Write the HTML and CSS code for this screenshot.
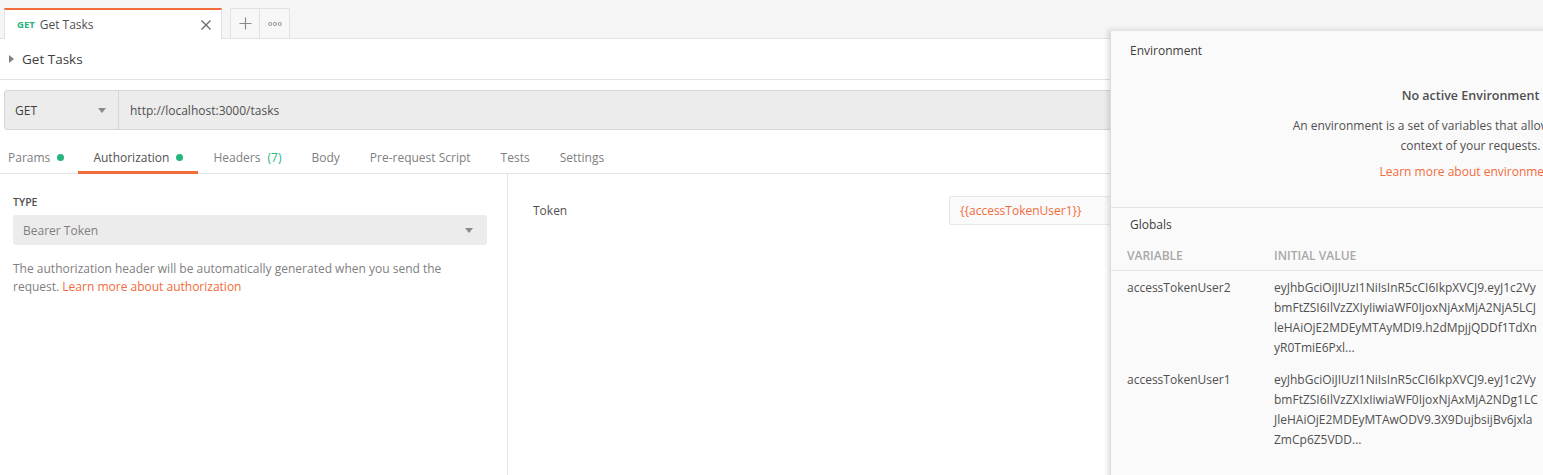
FILE: index.html
```html
<!DOCTYPE html>
<html>
<head>
<meta charset="utf-8">
<link rel="stylesheet" href="styles.css">
</head>
<body>
<div class="app">
  <div class="tabbar">
    <div class="tab">
      <span class="tab-method">GET</span>
      <span class="tab-name">Get Tasks</span>
      <svg class="tab-close" width="12" height="12" viewBox="0 0 12 12"><path d="M1.5 1.5 L10.5 10.5 M10.5 1.5 L1.5 10.5" stroke="#6b6b6b" stroke-width="1.4" fill="none"/></svg>
    </div>
    <div class="tab-actions">
      <div class="tab-btn"><svg width="13" height="13" viewBox="0 0 13 13"><path d="M6.5 0.5 V12.5 M0.5 6.5 H12.5" stroke="#8a8a8a" stroke-width="1.2" fill="none"/></svg></div>
      <div class="tab-btn"><svg width="14" height="6" viewBox="0 0 14 6"><circle cx="2.2" cy="3" r="1.6" stroke="#8a8a8a" fill="none" stroke-width="0.9"/><circle cx="7" cy="3" r="1.6" stroke="#8a8a8a" fill="none" stroke-width="0.9"/><circle cx="11.8" cy="3" r="1.6" stroke="#8a8a8a" fill="none" stroke-width="0.9"/></svg></div>
    </div>
  </div>

  <div class="req-header">
    <svg class="caret-right" width="5" height="8" viewBox="0 0 5 8"><path d="M0 0 L5 4 L0 8 Z" fill="#808080"/></svg>
    <span class="req-title">Get Tasks</span>
  </div>

  <div class="urlbar">
    <div class="method">
      <span>GET</span>
      <svg width="8" height="5" viewBox="0 0 8 5"><path d="M0 0 H8 L4 5 Z" fill="#8a8a8a"/></svg>
    </div>
    <div class="url">http://localhost:3000/tasks</div>
  </div>

  <div class="req-tabs">
    <div class="rtab first">Params <span class="dot"></span></div>
    <div class="rtab active">Authorization <span class="dot"></span></div>
    <div class="rtab">Headers <span class="count">(7)</span></div>
    <div class="rtab">Body</div>
    <div class="rtab">Pre-request Script</div>
    <div class="rtab">Tests</div>
    <div class="rtab">Settings</div>
  </div>

  <div class="content">
    <div class="auth-left">
      <div class="type-label">TYPE</div>
      <div class="select">
        <span>Bearer Token</span>
        <svg width="8" height="5" viewBox="0 0 8 5"><path d="M0 0 H8 L4 5 Z" fill="#8a8a8a"/></svg>
      </div>
      <p class="auth-desc">The authorization header will be automatically generated when you send the request. <span class="link">Learn more about authorization</span></p>
    </div>
    <div class="auth-right">
      <div class="token-row">
        <span class="token-label">Token</span>
        <div class="token-input">{{accessTokenUser1}}</div>
      </div>
    </div>
  </div>
</div>

<div class="env-panel">
  <div class="env-section">
    <div class="env-title">Environment</div>
    <div class="env-empty">
      <div class="env-empty-title">No active Environment</div>
      <p class="env-empty-text">An environment is a set of variables that allow you to switch the context of your requests.</p>
      <div class="link">Learn more about environments</div>
    </div>
  </div>
  <div class="globals">
    <div class="env-title">Globals</div>
    <div class="var-table">
      <div class="var-head">
        <span class="col-var">VARIABLE</span>
        <span class="col-val">INITIAL VALUE</span>
      </div>
      <div class="var-row">
        <span class="col-var">accessTokenUser2</span>
        <span class="col-val">
          <span class="vline">eyJhbGciOiJIUzI1NiIsInR5cCI6IkpXVCJ9.eyJ1c2Vy</span>
          <span class="vline">bmFtZSI6IlVzZXIyIiwiaWF0IjoxNjAxMjA2NjA5LCJ</span>
          <span class="vline">leHAiOjE2MDEyMTAyMDI9.h2dMpjjQDDf1TdXn</span>
          <span class="vline">yR0TmiE6Pxl...</span>
        </span>
      </div>
      <div class="var-row">
        <span class="col-var">accessTokenUser1</span>
        <span class="col-val">
          <span class="vline">eyJhbGciOiJIUzI1NiIsInR5cCI6IkpXVCJ9.eyJ1c2Vy</span>
          <span class="vline">bmFtZSI6IlVzZXIxIiwiaWF0IjoxNjAxMjA2NDg1LC</span>
          <span class="vline">JleHAiOjE2MDEyMTAwODV9.3X9DujbsijBv6jxla</span>
          <span class="vline">ZmCp6Z5VDD...</span>
        </span>
      </div>
    </div>
  </div>
</div>
</body>
</html>
```

FILE: styles.css
```css
* { box-sizing: border-box; }
html, body { margin: 0; padding: 0; }
body {
  font-family: "Open Sans", "Liberation Sans", sans-serif;
  font-size: 12px;
  color: #505050;
  background: #fff;
  width: 1543px;
  height: 475px;
  overflow: hidden;
  position: relative;
}
p { margin: 0; }

.tabbar {
  height: 39px;
  background: #f5f5f5;
  border-bottom: 1px solid #e2e2e2;
  display: flex;
  align-items: flex-end;
  padding-left: 4px;
}
.tab {
  width: 218px;
  height: 31px;
  background: #fff;
  border-top: 2px solid #f26b3a;
  border-left: 1px solid #e2e2e2;
  border-right: 1px solid #e2e2e2;
  margin-bottom: -1px;
  display: flex;
  align-items: center;
  padding: 0 9px 0 12px;
}
.tab-method {
  color: #26b47f;
  font-weight: 700;
  font-size: 9.5px;
  margin-right: 5px;
}
.tab-name { color: #505050; flex: 1; }
.tab-close { display: block; }
.tab-actions {
  display: flex;
  margin-left: 8px;
}
.tab-btn {
  width: 30px;
  height: 30px;
  border: 1px solid #e2e2e2;
  border-bottom: none;
  background: #f7f7f7;
  display: flex;
  align-items: center;
  justify-content: center;
}
.tab-btn + .tab-btn { border-left: none; }

.req-header {
  height: 41px;
  border-bottom: 1px solid #e2e2e2;
  display: flex;
  align-items: center;
  padding-left: 9px;
}
.caret-right { margin-right: 8px; }
.req-title {
  font-size: 13.5px;
  font-weight: 400;
  color: #404040;
}

.urlbar {
  margin: 10px 0 0 4px;
  width: 1300px;
  height: 40px;
  background: #ececec;
  border: 1px solid #d6d6d6;
  border-radius: 3px 0 0 3px;
  display: flex;
  align-items: center;
}
.method {
  width: 114px;
  height: 100%;
  border-right: 1px solid #d6d6d6;
  display: flex;
  align-items: center;
  justify-content: space-between;
  padding: 0 12px 0 10px;
  color: #404040;
  font-weight: 400;
}
.url {
  padding-left: 11px;
  color: #505050;
}

.req-tabs {
  margin-top: 10px;
  height: 34px;
  border-bottom: 1px solid #e2e2e2;
  display: flex;
  align-items: stretch;
}
.rtab {
  padding: 0 15px;
  display: flex;
  align-items: center;
  color: #808080;
  font-size: 12px;
  border-bottom: 3px solid transparent;
  padding-top: 3px;
  margin-bottom: -1px;
  white-space: pre;
}
.rtab.first { padding-left: 8px; padding-right: 14px; }
.rtab.active {
  color: #505050;
  border-bottom-color: #f26b3a;
}
.dot {
  display: inline-block;
  width: 7px;
  height: 7px;
  border-radius: 50%;
  background: #26b47f;
  margin-left: 4px;
}
.count { color: #26b47f; margin-left: 4px; }

.content {
  display: flex;
  height: 302px;
}
.auth-left {
  width: 508px;
  border-right: 1px solid #e2e2e2;
  padding: 21px 20px 0 13px;
}
.type-label {
  font-size: 10.5px;
  font-weight: 600;
  color: #505050;
  margin-bottom: 6px;
}
.select {
  height: 30px;
  background: #ececec;
  border-radius: 3px;
  display: flex;
  align-items: center;
  justify-content: space-between;
  padding: 0 14px 0 10px;
  color: #808080;
}
.auth-desc {
  margin-top: 15px;
  line-height: 18px;
  color: #808080;
  width: 460px;
}
.link { color: #f26b3a; }

.auth-right {
  flex: 1;
  padding: 22px 0 0 25px;
}
.token-row {
  display: flex;
  align-items: center;
}
.token-label {
  width: 416px;
  color: #505050;
}
.token-input {
  width: 300px;
  height: 29px;
  border: 1px solid #e8e8e8;
  border-radius: 2px;
  background: #fafafa;
  color: #f26b3a;
  display: flex;
  align-items: center;
  padding-left: 10px;
}

.env-panel {
  position: absolute;
  left: 1110px;
  top: 30px;
  width: 720px;
  height: 460px;
  background: #fafafa;
  border-top: 1px solid #e4e4e4;
  border-left: 1px solid #dcdcdc;
  box-shadow: -2px 0 5px rgba(0, 0, 0, 0.14);
}
.env-section {
  border-bottom: 1px solid #e4e4e4;
  height: 177px;
}
.env-title {
  padding: 11px 19px 0;
  font-size: 12px;
  font-weight: 400;
  color: #404040;
}
.env-empty {
  text-align: center;
  padding-top: 28px;
}
.env-empty-title {
  font-size: 12.5px;
  font-weight: 600;
  color: #505050;
}
.env-empty-text {
  width: 372px;
  margin: 12px auto 0;
  line-height: 20px;
  color: #505050;
}
.env-empty .link { margin-top: 7px; }

.globals .env-title { padding-top: 8px; }
.var-table { margin-top: 8px; }
.var-head {
  display: flex;
  height: 30px;
  align-items: center;
  border-bottom: 1px solid #e4e4e4;
  padding-left: 16px;
  font-weight: 600;
  color: #a8a8a8;
}
.var-row {
  display: flex;
  padding: 7px 0 5px 16px;
  line-height: 20px;
  color: #505050;
}
.col-var { width: 147px; }
.col-val { width: 280px; }
.vline { display: block; white-space: nowrap; }
```
